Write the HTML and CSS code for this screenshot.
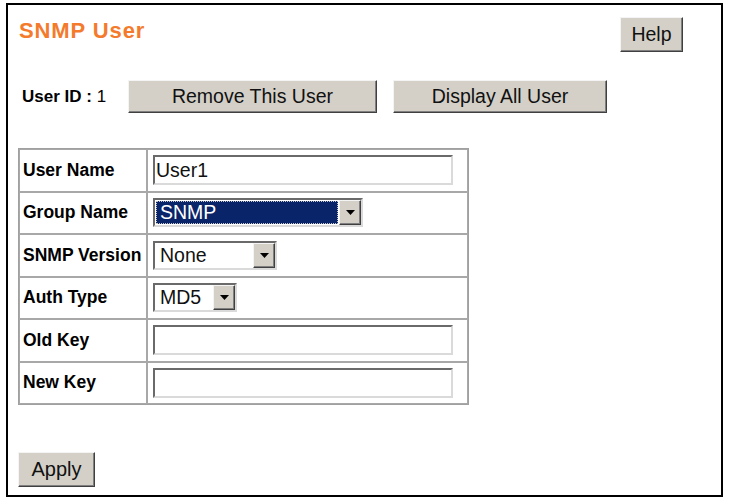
FILE: index.html
```html
<!DOCTYPE html>
<html>
<head>
<meta charset="utf-8">
<title>SNMP User</title>
<link rel="stylesheet" href="styles.css">
</head>
<body>
<div class="frame">
  <div class="header">
    <h1 class="title">SNMP User</h1>
    <button class="btn btn-help" type="button">Help</button>
  </div>
  <div class="idrow">
    <span class="idlabel"><b>User ID :</b> 1</span>
    <button class="btn btn-remove" type="button">Remove This User</button>
    <button class="btn btn-display" type="button">Display All User</button>
  </div>
  <table class="form">
    <tr>
      <td class="lbl">User Name</td>
      <td class="val"><div class="input">User1</div></td>
    </tr>
    <tr>
      <td class="lbl">Group Name</td>
      <td class="val">
        <div class="select sel-group">
          <div class="sel-text focused"><span>SNMP</span></div>
          <div class="arrow"><svg width="9" height="5" viewBox="0 0 9 5"><path d="M0 0H9L4.5 5Z" fill="#000"/></svg></div>
        </div>
      </td>
    </tr>
    <tr>
      <td class="lbl">SNMP Version</td>
      <td class="val">
        <div class="select sel-version">
          <div class="sel-text">None</div>
          <div class="arrow"><svg width="9" height="5" viewBox="0 0 9 5"><path d="M0 0H9L4.5 5Z" fill="#000"/></svg></div>
        </div>
      </td>
    </tr>
    <tr>
      <td class="lbl">Auth Type</td>
      <td class="val">
        <div class="select sel-auth">
          <div class="sel-text">MD5</div>
          <div class="arrow"><svg width="9" height="5" viewBox="0 0 9 5"><path d="M0 0H9L4.5 5Z" fill="#000"/></svg></div>
        </div>
      </td>
    </tr>
    <tr>
      <td class="lbl">Old Key</td>
      <td class="val"><div class="input"></div></td>
    </tr>
    <tr>
      <td class="lbl">New Key</td>
      <td class="val"><div class="input"></div></td>
    </tr>
  </table>
  <button class="btn btn-apply" type="button">Apply</button>
</div>
</body>
</html>
```
FILE: styles.css
```css
html, body {
  margin: 0;
  padding: 0;
  background: #fff;
}
body {
  font-family: "Liberation Sans", Arial, sans-serif;
  color: #000;
}
.frame {
  box-sizing: border-box;
  margin: 3px 0 0 6px;
  width: 717px;
  height: 494px;
  border: 2px solid #000;
  padding: 0 0 0 10px;
}
.header {
  display: flex;
  justify-content: space-between;
  align-items: flex-start;
  margin-top: 12px;
  height: 35px;
  padding-right: 38px;
}
.title {
  margin: 2px 0 0 1px;
  font-size: 22px;
  line-height: 24px;
  font-weight: bold;
  letter-spacing: 0.9px;
  color: #f47a2c;
}
.btn {
  box-sizing: border-box;
  font-family: "Liberation Sans", Arial, sans-serif;
  font-size: 19.5px;
  color: #111;
  background: #d4d0c8;
  border: 1px solid;
  border-color: #f4f4f4 #404040 #404040 #f4f4f4;
  box-shadow: inset -1px -1px 0 #808080;
  padding: 0;
  margin: 0;
}
.btn-help {
  width: 63px;
  height: 35px;
}
.idrow {
  display: flex;
  align-items: center;
  margin-top: 28px;
  height: 33px;
}
.idlabel {
  font-size: 17px;
  margin-left: 4px;
  width: 106px;
}
.btn-remove {
  width: 249px;
  height: 33px;
}
.btn-display {
  width: 214px;
  height: 33px;
  margin-left: 16px;
}
.form {
  margin-top: 35px;
  border-collapse: separate;
  border-spacing: 0;
  border: 1px solid #a0a0a0;
  width: 451px;
}
.form td {
  box-sizing: border-box;
  height: 42.5px;
  border: 1px solid #a8a8a8;
  padding: 0;
  vertical-align: middle;
}
.lbl {
  width: 128px;
  padding-left: 3px !important;
  font-size: 17.5px;
  font-weight: bold;
  white-space: nowrap;
}
.val {
  padding-left: 5px !important;
}
.input {
  box-sizing: border-box;
  width: 300px;
  height: 30px;
  border: 2px solid;
  border-color: #6a6a6a #dadada #dadada #6a6a6a;
  background: #fff;
  font-size: 19.5px;
  line-height: 26px;
  padding-left: 1px;
  color: #111;
}
.select {
  box-sizing: border-box;
  display: flex;
  height: 29px;
  border: 2px solid;
  border-color: #6a6a6a #dadada #dadada #6a6a6a;
  background: #fff;
  font-size: 19.5px;
  color: #111;
}
.sel-group { width: 210px; }
.sel-version { width: 124px; }
.sel-auth { width: 84px; }
.sel-text {
  flex: 1;
  line-height: 25px;
  padding-left: 5px;
}
.sel-text.focused {
  margin: 1px;
  padding-left: 0;
  background: #0a246a;
  border: 1px dotted #c8c8c8;
  color: #fff;
  line-height: 21px;
}
.sel-text.focused span {
  padding-left: 3px;
}
.arrow {
  box-sizing: border-box;
  width: 22px;
  height: 25px;
  background: #d4d0c8;
  border: 1px solid;
  border-color: #f4f4f4 #404040 #404040 #f4f4f4;
  box-shadow: inset -1px -1px 0 #808080;
  display: flex;
  align-items: center;
  justify-content: center;
}
.btn-apply {
  display: block;
  margin-top: 47px;
  width: 77px;
  height: 35px;
  font-size: 20px;
}
```
